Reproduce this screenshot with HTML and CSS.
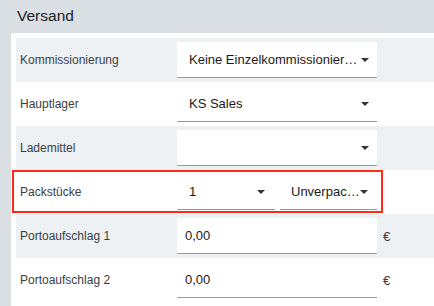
FILE: index.html
```html
<!DOCTYPE html>
<html lang="de">
<head>
  <meta charset="utf-8" />
  <title>Versand</title>
  <link rel="stylesheet" href="styles.css">
</head>
<body>

  <div class="section-head">Versand</div>

  <div class="panel">
    <div class="row">
      <label class="label">Kommissionierung</label>
      <div class="select wide">
        <span class="value">Keine Einzelkommissionierung</span>
        <span class="caret"></span>
      </div>
    </div>

    <div class="row">
      <label class="label">Hauptlager</label>
      <div class="select wide">
        <span class="value">KS Sales</span>
        <span class="caret"></span>
      </div>
    </div>

    <div class="row">
      <label class="label">Lademittel</label>
      <div class="select wide">
        <span class="value"></span>
        <span class="caret"></span>
      </div>
    </div>

    <!-- marked row -->
    <div class="row marked">
      <div class="mark"></div>
      <label class="label">Packstücke</label>
      <div class="pair">
        <div class="select half first">
          <span class="value">1</span>
          <span class="caret"></span>
        </div>
        <div class="select half">
          <span class="value">Unverpac…</span>
          <span class="caret"></span>
        </div>
      </div>
    </div>

    <div class="row">
      <label class="label">Portoaufschlag 1</label>
      <input class="field" type="text" value="0,00">
      <span class="unit">€</span>
    </div>

    <div class="row">
      <label class="label">Portoaufschlag 2</label>
      <input class="field" type="text" value="0,00">
      <span class="unit">€</span>
    </div>
  </div>

</body>
</html>
```

FILE: styles.css
```css
:root {
  --frame:  #d9dfe3;
  --stripe: #edf1f4;
  --line:   #8e9aa4;
  --label:  #3a3e42;
  --text:   #1a1a1a;
  --mark:   #ff2a12;
}
*, *::before, *::after { box-sizing: border-box; margin:0; padding:0; }
body {
  font-family: "Liberation Sans", Arial, sans-serif;
  background: var(--frame);
  color: var(--text);
  width: 434px; height: 306px; overflow: hidden;
}

.section-head {
  height: 33px; line-height: 31px;
  padding-left: 17px;
  font-size: 15.5px; color: #222;
}

.panel {
  margin-left: 11px;
  background: #fff;
  padding: 5px 0 0 5px;
  height: 273px;
}

.row {
  position: relative;
  display: flex; align-items: center;
  height: 44px; padding: 4px 0 4px 4px;
}
.row:nth-child(odd) { background: var(--stripe); }
.label { width: 157px; font-size: 12px; color: var(--label); }

.select, .field {
  height: 36px; background: #fff;
  border: none; border-bottom: 1px solid var(--line);
  font-family: inherit; font-size: 13px; color: var(--text);
}
.select {
  display: flex; align-items: center;
  padding: 0 8px 0 12px;
}
.select .value {
  flex: 1; min-width: 0;
  white-space: nowrap; overflow: hidden; text-overflow: ellipsis;
}
.caret {
  flex: none; margin-left: 3px;
  width: 0; height: 0;
  border-left: 4px solid transparent;
  border-right: 4px solid transparent;
  border-top: 4px solid #333;
}
.wide { width: 200px; }

.pair { display: flex; gap: 5px; width: 200px; }
.half { width: 97px; padding: 0 9px 0 11px; }
.half .value { overflow: visible; }
.half .caret { margin-left: 0; }
.half.first { width: 98px; padding: 0 10px 0 12px; }

.field { width: 200px; padding: 0 8px; outline: none; }
.unit { margin-left: 6px; font-size: 13px; color: var(--label); }

.mark {
  position: absolute; left: -4px; top: 0;
  width: 371px; height: 43px;
  border: 2px solid var(--mark);
  pointer-events: none;
}
```
